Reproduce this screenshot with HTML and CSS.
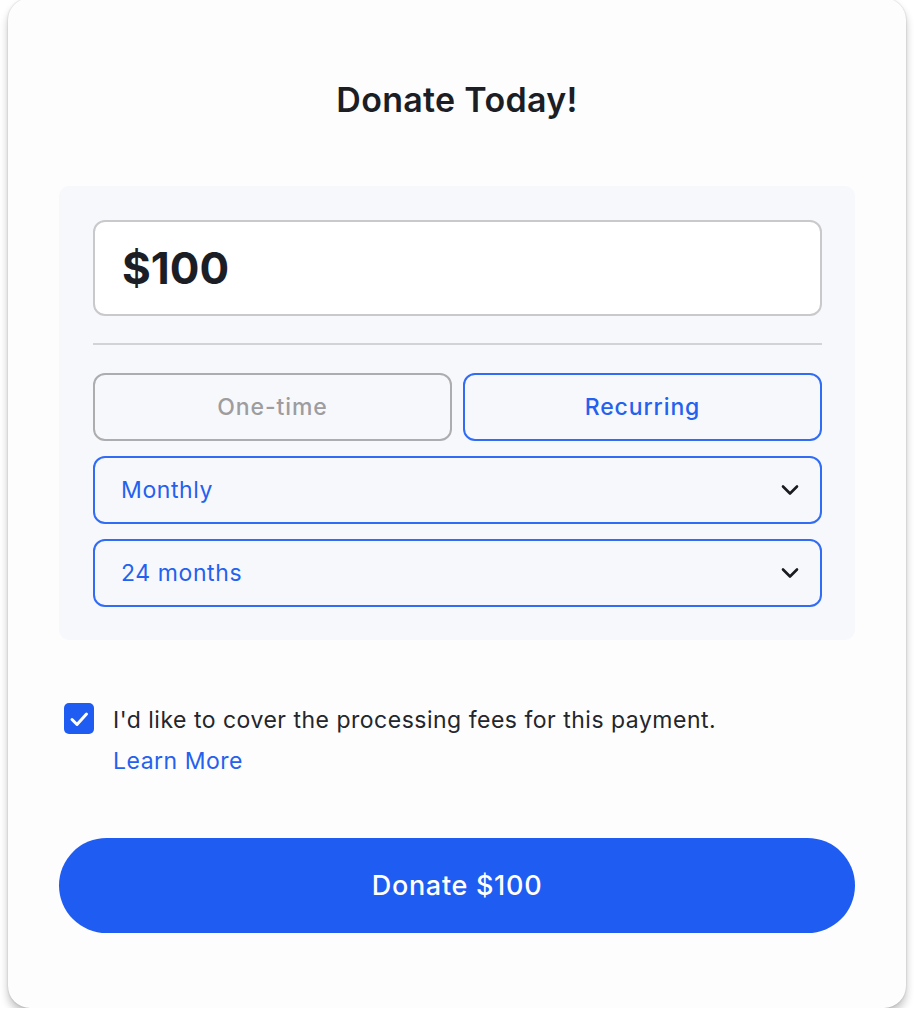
FILE: index.html
```html
<!DOCTYPE html>
<html lang="en">
<head>
<meta charset="utf-8">
<title>Donate Today!</title>
<link rel="stylesheet" href="styles.css">
</head>
<body>
<main class="card">
  <h1 class="title">Donate Today!</h1>
  <section class="panel">
    <div class="amount">$100</div>
    <hr class="divider">
    <div class="freq">
      <button class="freq-btn">One-time</button>
      <button class="freq-btn active">Recurring</button>
    </div>
    <div class="select">
      <span>Monthly</span>
      <svg class="chev" width="18" height="12" viewBox="0 0 18 12"><path d="M2 2.5 L9 9.5 L16 2.5" fill="none" stroke="#1a1b20" stroke-width="2.6" stroke-linecap="round" stroke-linejoin="round"/></svg>
    </div>
    <div class="select">
      <span>24 months</span>
      <svg class="chev" width="18" height="12" viewBox="0 0 18 12"><path d="M2 2.5 L9 9.5 L16 2.5" fill="none" stroke="#1a1b20" stroke-width="2.6" stroke-linecap="round" stroke-linejoin="round"/></svg>
    </div>
  </section>
  <div class="fees">
    <span class="check">
      <svg width="30" height="30" viewBox="0 0 30 30"><path d="M8 15.5 L13 20.5 L22.5 10" fill="none" stroke="#fff" stroke-width="3" stroke-linecap="round" stroke-linejoin="round"/></svg>
    </span>
    <div class="fees-text">
      <p>I'd like to cover the processing fees for this payment.</p>
      <a href="#" class="learn">Learn More</a>
    </div>
  </div>
  <button class="donate">Donate $100</button>
</main>
</body>
</html>
```
FILE: styles.css
```css
* { box-sizing: border-box; }
html, body { margin: 0; padding: 0; background: #ffffff; }
body {
  font-family: Inter, "Noto Sans", "Liberation Sans", sans-serif;
  color: #1c1e26;
  overflow: hidden;
}
.card {
  margin: -2px 8px 0 8px;
  height: 1010px;
  background: #fdfdfd;
  border-radius: 22px;
  box-shadow: 0 0 2px rgba(0,0,0,0.2), 0 6px 9px rgba(0,0,0,0.24);
  padding: 82px 51px 0 51px;
  display: flex;
  flex-direction: column;
}
.title {
  margin: 0;
  height: 40px;
  line-height: 40px;
  text-align: center;
  font-size: 34px;
  font-weight: 600;
  letter-spacing: 0.3px;
  color: #1c1e26;
}
.panel {
  margin-top: 66px;
  background: #f7f8fc;
  border-radius: 10px;
  padding: 34px 33px 33px 34px;
  display: flex;
  flex-direction: column;
}
.amount {
  height: 96px;
  background: #ffffff;
  border: 2px solid #c9c9cb;
  border-radius: 12px;
  padding-left: 27px;
  display: flex;
  align-items: center;
  font-size: 44px;
  font-weight: 700;
  color: #1c1e26;
}
.divider {
  border: 0;
  border-top: 2px solid #d3d3d5;
  margin: 27px 0 28px 0;
}
.freq {
  display: flex;
  gap: 11px;
}
.freq-btn {
  flex: 1;
  height: 68px;
  background: transparent;
  border: 2px solid #adadaf;
  border-radius: 12px;
  font-family: inherit;
  font-size: 23px;
  font-weight: 500;
  color: #9d9d9f;
  letter-spacing: 0.9px;
}
.freq-btn.active {
  border-color: #316cf4;
  color: #2461ee;
}
.select {
  margin-top: 15px;
  height: 68px;
  border: 2px solid #316cf4;
  border-radius: 12px;
  padding: 0 21px 0 26px;
  display: flex;
  align-items: center;
  justify-content: space-between;
  font-size: 23px;
  font-weight: 400;
  letter-spacing: 0.6px;
  color: #2461ee;
}
.select + .select { margin-top: 15px; }
.chev { display: block; }
.fees {
  margin-top: 60px;
  padding-left: 5px;
  display: flex;
  gap: 19px;
  align-items: flex-start;
}
.check {
  margin-top: 3px;
  width: 30px;
  height: 31px;
  border-radius: 5px;
  background: #1f5cf2;
  display: flex;
  align-items: center;
  justify-content: center;
  flex: none;
}
.check svg { display: block; }
.fees-text p {
  margin: 0;
  font-size: 23px;
  line-height: 41px;
  letter-spacing: 0.5px;
  color: #24262d;
}
.learn {
  display: block;
  font-size: 23px;
  line-height: 41px;
  letter-spacing: 0.5px;
  color: #2461ee;
  text-decoration: none;
}
.donate {
  margin-top: 56px;
  height: 95px;
  border: 0;
  border-radius: 48px;
  background: #1f5cf2;
  color: #ffffff;
  font-family: inherit;
  font-size: 27px;
  font-weight: 500;
  letter-spacing: 0.7px;
}
```
